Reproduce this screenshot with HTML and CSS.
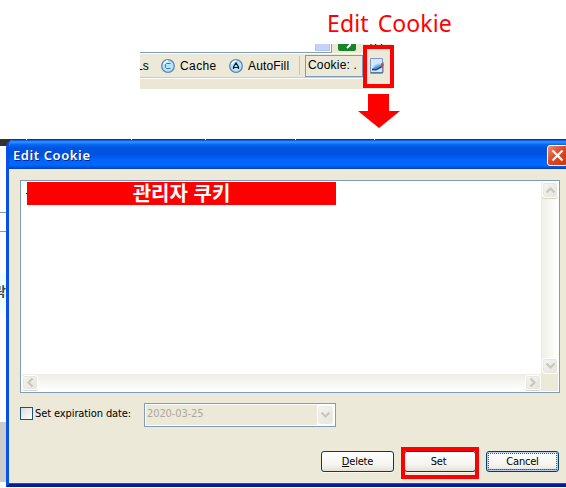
FILE: index.html
```html
<!DOCTYPE html>
<html lang="ko">
<head>
<meta charset="utf-8">
<title>Edit Cookie</title>
<link rel="stylesheet" href="styles.css">
</head>
<body>
<header class="caption"><span>Edit Cookie</span></header>
<section class="toolbar">
  <div class="address-row">
    <div class="address"><i></i></div>
    <span class="go"><svg width="18" height="8" viewBox="0 0 18 8"><path d="M0 0h18v5q0 2-2 2H2q-2 0-2-2z" fill="#16852a"/><path d="M9 4l3-3V0" stroke="#fff" stroke-width="2" fill="none"/></svg></span>
    <span class="go-text">이동</span>
  </div>
  <div class="tools">
    <span class="urls">Ls</span>
    <svg class="orb" width="14" height="14" viewBox="0 0 14 14"><circle cx="7" cy="7" r="6.3" fill="#b4e6fb" stroke="#6582b0" stroke-width="1.3"/><path d="M3 5q1-3 4-3" stroke="#fff" stroke-width="1.5" fill="none"/><path d="M9.500 4.500h-4l-1 1v3l1 1h4" stroke="#54718e" fill="none"/></svg>
    <span class="cache">Cache</span>
    <svg class="orb" width="14" height="14" viewBox="0 0 14 14"><circle cx="7" cy="7" r="6.3" fill="#b4e6fb" stroke="#6582b0" stroke-width="1.3"/><path d="M3 5q1-3 4-3" stroke="#fff" stroke-width="1.5" fill="none"/><path d="M4.500 10V8L7 4l2.500 4v2M5 8.500h4" stroke="#101c28" stroke-width="1.2" fill="none"/></svg>
    <span class="autofill">AutoFill</span>
    <i class="divider"></i>
    <div class="cookie-field">Cookie: .</div>
    <div class="edit"><svg width="15" height="16" viewBox="0 0 15 16"><path d="M.5.5h12v15H.5z" fill="#d5e7fa" stroke="#8197bd"/><path d="M1 14.500h12V4" stroke="#587bab" fill="none"/><path d="M2 11l3-3 7-2 1 2-7 3z" fill="#5c9be0"/><path d="M2 11.500l4 .2 6-3" stroke="#174274" stroke-width="1.5" fill="none"/><path d="M4 8l6-2" stroke="#8ed0ff" stroke-width="1.500"/><path d="M11 5l3 1-1 3-2-1z" fill="#d84a35"/></svg></div>
  </div>
  <div class="tool-bottom"></div>
</section>
<svg class="arrow" width="44" height="35" viewBox="0 0 44 35"><path d="M11 0h21v17h11L22 34 1 17h10z" fill="#f00"/></svg>
<main class="scene">
  <aside class="behind"><div class="strip"></div><div class="line-a"></div><div class="line-b"></div><div class="cyan"><span>락</span></div><div class="gap"></div><div class="gray"></div></aside>
  <section class="dialog">
    <div class="titlebar"><h1>Edit Cookie</h1><button class="close" aria-label="Close"><svg width="19" height="19" viewBox="0 0 19 19"><path d="M4.500 4.500l10 10m0-10l-10 10" stroke="#fff" stroke-width="2.300"/></svg></button></div>
    <div class="client">
      <div class="textarea">
        <div class="text"><i></i><div class="cookie-value">관리자 쿠키</div></div>
        <div class="vbar"><b><svg width="11" height="8" viewBox="0 0 11 8"><path d="M1.500 6.500l4-4 4 4"/></svg></b><b><svg width="11" height="8" viewBox="0 0 11 8"><path d="M1.500 1.500l4 4 4-4"/></svg></b></div>
        <div class="hbar"><b><svg width="8" height="11" viewBox="0 0 8 11"><path d="M6.500 1.500l-4 4 4 4"/></svg></b><b><svg width="8" height="11" viewBox="0 0 8 11"><path d="M1.500 1.500l4 4-4 4"/></svg></b></div>
        <div class="corner"></div>
      </div>
      <div class="expiry"><i class="check"></i><label>Set expiration date:</label><div class="select"><span>2020-03-25</span><b><svg width="11" height="8" viewBox="0 0 11 8"><path d="M1.500 1.500l4 4 4-4"/></svg></b></div></div>
      <div class="actions"><button class="btn"><span><u>D</u>elete</span></button><button class="btn set"><span>Set</span></button><button class="btn cancel"><span>Cancel</span></button></div>
    </div>
  </section>
  <div class="ticks"><i></i><i></i><i></i><i></i><i></i></div>
</main>
</body>
</html>
```
FILE: styles.css
```css
*, *::before, *::after { box-sizing: border-box; }
body { margin: 0; width: 566px; height: 488px; overflow: hidden; background: #fff; font-family: "DejaVu Sans Condensed", "DejaVu Sans", sans-serif; font-stretch: condensed; font-size: 11px; color: #000; }
svg { display: block; flex: none; }
button { margin: 0; padding: 0; font: inherit; color: inherit; }
.caption { height: 44px; padding: 7px 0 0 327px; color: #f00; font: 23px/32px "Noto Sans", sans-serif; white-space: nowrap; }
.caption span { letter-spacing: .1px; word-spacing: 3px; }
.toolbar { margin-left: 140px; width: 252px; height: 45px; background: #ece9d8; overflow: hidden; }
.address-row { height: 9px; display: flex; overflow: hidden; }
.address { width: 192px; border-right: 1px solid #7f9db9; border-bottom: 1px solid #7f9db9; background: #ece9d8; display: flex; justify-content: flex-end; background: #fff; }
.address i { width: 15px; height: 7px; background: #c5d3fc; border: 1px solid #b0c4f2; border-top: 0; margin-right: 1px; }
.go { margin-left: 6px; }
.go-text { margin: -10px 0 0 6px; font: 12px/14px "Noto Sans CJK KR", sans-serif; }
.tools { height: 25px; border-top: 1px solid #fff; border-bottom: 1px solid #d0ccba; display: flex; align-items: center; font: 12px/22px "Liberation Sans", sans-serif; white-space: nowrap; }
.tools > span { flex: none; }
.urls { width: 21px; margin-left: -5px; padding-left: 1px; }
.orb { margin-left: 5px; }
.cache { width: 44px; margin-left: 5px; letter-spacing: .4px; }
.autofill { width: 46px; margin-left: 5px; letter-spacing: .15px; }
.divider { height: 19px; width: 1px; margin-left: 5px; background: #c7c3b2; }
.cookie-field { flex: none; width: 58px; height: 22px; margin-left: 5px; padding-left: 2px; line-height: 19px; border: 1px solid #7f9db9; letter-spacing: .2px; overflow: hidden; }
.edit { position: fixed; left: 363px; top: 45px; width: 31px; height: 43px; border: 4px solid #f00; background: #ece9d8; padding: 9px 0 0 3px; }
.tool-bottom { height: 11px; border-top: 1px solid #fff; background: #ece7d5; }
.arrow { margin: 5px 0 0 357px; height: 35px; }
.scene { position: relative; margin-top: 10px; height: 349px; display: flex; border-top: 1px solid #333; background: #fff; }
.behind { width: 6px; flex: none; overflow: visible; }
.strip { width: 12px; height: 6px; background: #333; }
.line-a { height: 67px; border-bottom: 1px solid #7f9db9; }
.line-b { height: 19px; border-bottom: 1px solid #7f9db9; }
.cyan { height: 39px; margin-top: 42px; background: #efffff; overflow: hidden; display: flex; justify-content: flex-end; font: bold 13px/34px "Noto Sans CJK KR", sans-serif; color: #444; }
.gap { height: 109px; }
.gray { height: 60px; background: #ccc; }
.dialog { position: relative; width: 560px; height: 347px; flex: none; background: #ece9d8; border-left: 3px solid #0651e7; border-bottom: 3px solid #001ba2; border-top-left-radius: 7px; box-shadow: inset 0 -1px #0651e7; overflow: hidden; }
.titlebar { height: 29px; display: flex; align-items: center; justify-content: space-between; margin-left: -3px; padding-left: 7px; background: linear-gradient(#0057df 0, #3993ff 7%, #066af2 15%, #0053df 27%, #0052e0 50%, #0063f8 67%, #0069ff 84%, #0058e4 93%, #003bbd 100%); }
.titlebar h1 { margin: 0; color: #fff; font: 600 13px/20px "Noto Sans", sans-serif; text-shadow: 1px 1px #0b248a; letter-spacing: .6px; }
.close { width: 21px; height: 21px; margin: 2px -2px 0 0; border: 1px solid #fff; border-radius: 3px; background: linear-gradient(135deg, #ef8f76, #de4927 45%, #c93708); flex: none; }
.client { padding: 11px 0 0 11px; }
.textarea { width: 540px; height: 213px; padding: 1px; border: 1px solid #7f9db9; background: #fff; display: grid; grid-template: 192px 17px / 519px 17px; }
.text { display: flex; }
.text i { width: 2px; height: 1px; margin: 11px 0 0 4px; background: #000; }
.text i + div { margin-left: -1px; }
.cookie-value { width: 309px; height: 23px; background: #f00; color: #fff; text-align: center; font: bold 20px/21px "Noto Sans CJK KR", sans-serif; }
.vbar, .hbar { display: flex; justify-content: space-between; background: linear-gradient(90deg, #f0f0e8, #fff); }
.vbar { flex-direction: column; border-left: 1px solid #eeede5; }
.hbar { background: linear-gradient(#efeee7, #fff); border-top: 1px solid #eeede5; }
.corner { background: #ece9d8; }
b { display: flex; align-items: center; justify-content: center; background: linear-gradient(135deg, #f5f5f1, #e5e5dd); border: 1px solid #fff; border-radius: 3px; box-shadow: inset 0 0 0 1px #e8e7df, 0 1px #d5d3c4; }
.vbar b { height: 16px; }
.hbar b { width: 16px; height: 15px; }
b path { fill: none; stroke: #c8c7bd; stroke-width: 2.200; }
.expiry { height: 24px; margin-top: 10px; display: flex; align-items: flex-start; }
.check { width: 13px; height: 13px; margin-top: 4px; border: 1px solid #1c5180; background: linear-gradient(135deg, #dcdcd7, #fff); }
label { width: 108px; margin: 4px 0 0 2px; line-height: 14px; white-space: nowrap; letter-spacing: -.1px; }
.select { width: 192px; height: 24px; margin-left: 1px; border: 1px solid #7f9db9; padding: 1px; background: #fff; display: flex; }
.select span { width: 171px; padding-left: 1px; background: #ece9d8; color: #aca899; line-height: 18px; letter-spacing: -.1px; border: 0; }
.select b { width: 17px; box-shadow: inset 0 0 0 1px #ecece4; }
.actions { display: flex; margin: 24px 0 0 301px; gap: 10px; }
.btn { width: 73px; height: 21px; border: 1px solid #003c74; border-radius: 3px; background: linear-gradient(#fff, #f4f3ee 70%, #e4e0d4); box-shadow: 0 1px #f8f6ed; line-height: 18px; letter-spacing: -.2px; }
.set { position: relative; width: 72px; }
.set span { margin-right: 3px; }
.set::after { content: ""; position: absolute; left: -4px; top: -5px; width: 78px; height: 32px; border: 4px solid #f00; }
.cancel { box-shadow: inset 0 0 0 1px #b6cdf6, inset 0 -2px #6986dc; }
.cancel span { display: block; margin: 1px; height: 17px; border: 1px dotted #6c5035; line-height: 15px; }
.ticks { position: absolute; inset: -1px 0 auto; height: 1px; }
.ticks i { position: absolute; width: 1px; height: 1px; background: #fff; }
.ticks i:nth-child(1) { left: 26px; }
.ticks i:nth-child(2) { left: 131px; }
.ticks i:nth-child(3) { left: 205px; }
.ticks i:nth-child(4) { left: 295px; }
.ticks i:nth-child(5) { left: 374px; }
```
